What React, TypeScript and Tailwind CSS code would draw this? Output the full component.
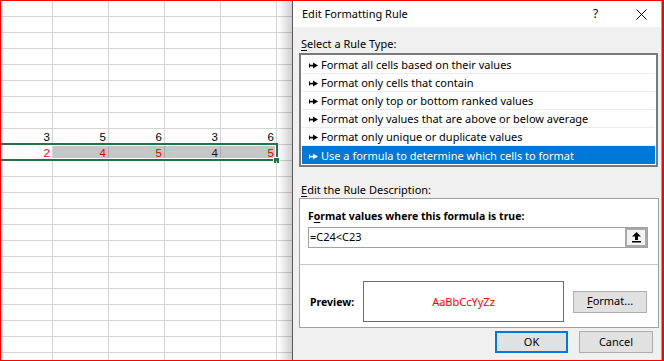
const font = { fontFamily: '"Noto Sans", "Open Sans", sans-serif' };

const COLS = [52, 56, 56, 56, 56, 40];
const ROWS = 23;

const rowValues: Record<number, { v: string; c: string }[]> = {
  8: [
    { v: "3", c: "text-black" },
    { v: "5", c: "text-black" },
    { v: "6", c: "text-black" },
    { v: "3", c: "text-black" },
    { v: "6", c: "text-black" },
  ],
  9: [
    { v: "2", c: "text-[#ff0000]" },
    { v: "4", c: "text-[#e00000]" },
    { v: "5", c: "text-[#e00000]" },
    { v: "4", c: "text-[#1a1a1a]" },
    { v: "5", c: "text-[#e00000]" },
  ],
};

function Sheet() {
  return (
    <div className="w-[291px] h-full shrink-0 flex flex-col bg-white" style={{ fontFamily: '"Liberation Sans", Arial, sans-serif' }}>
      {Array.from({ length: ROWS }).map((_, r) => (
        <div key={r} className="relative flex h-[16px] shrink-0">
          {COLS.map((w, c) => {
            const cell = rowValues[r]?.[c];
            const selected = r === 9 && c > 0 && c < 5;
            return (
              <div
                key={c}
                style={{ width: w }}
                className={`shrink-0 h-full border-r border-b border-[#d4d4d4] flex items-end justify-end pr-[2px] text-[11.5px] leading-[13px] ${
                  selected ? "bg-[#c6c6c6] border-r-[#ababab]" : ""
                } ${cell ? cell.c : ""}`}
              >
                {cell?.v}
              </div>
            );
          })}
          {r === 9 && (
            <>
              <div className="absolute left-[-4px] top-[-2px] w-[281px] h-[18px] border-2 border-[#217346] shadow-[inset_0_0_0_1px_#ffffff]" />
              <div className="absolute left-[272px] top-[12px] w-[7px] h-[7px] bg-[#217346] border border-white" />
            </>
          )}
        </div>
      ))}
    </div>
  );
}

function RuleArrow({ white }: { white?: boolean }) {
  const col = white ? "#ffffff" : "#000000";
  return (
    <svg width="9" height="7" viewBox="0 0 9 7" className="shrink-0">
      <rect x="0" y="1.5" width="1" height="4" fill={col} />
      <rect x="0" y="2.8" width="5" height="1.6" fill={col} />
      <path d="M4 0.5 L9 3.5 L4 6.5 Z" fill={col} />
    </svg>
  );
}

const rules = [
  "Format all cells based on their values",
  "Format only cells that contain",
  "Format only top or bottom ranked values",
  "Format only values that are above or below average",
  "Format only unique or duplicate values",
  "Use a formula to determine which cells to format",
];

function Button({ children, primary, w }: { children: React.ReactNode; primary?: boolean; w: string }) {
  return (
    <div
      className={`${w} h-[22px] flex items-center justify-center bg-[#e1e1e1] text-[11px] text-black ${
        primary ? "border-2 border-[#0078d7]" : "border border-[#adadad]"
      }`}
    >
      {children}
    </div>
  );
}

function Dialog() {
  return (
    <div className="relative flex-1 h-full border-l border-r border-l-[#6f6f6f] border-r-[#a0a0a0] bg-[#f0f0f0] flex flex-col text-black" style={font}>
      <div className="absolute right-full top-0 bottom-0 w-[15px] bg-gradient-to-r from-transparent to-black/20" />

      <div className="h-[26px] shrink-0 bg-white flex items-center pl-[9px] text-[11px]">
        <span className="flex-1">Edit Formatting Rule</span>
        <span className="w-[8px] mr-[35px] text-[12px] leading-none">?</span>
        <svg width="11" height="11" viewBox="0 0 11 11" className="mr-[14px]">
          <path d="M0.5 0.5 L10.5 10.5 M10.5 0.5 L0.5 10.5" stroke="#000" strokeWidth="1" />
        </svg>
      </div>

      <div className="pt-[9px] flex flex-col">
        <div className="h-[17px] leading-[16px] pl-[8px] text-[11px]">
          <span className="underline underline-offset-2">S</span>elect a Rule Type:
        </div>
        <div className="ml-[6px] w-[359px] h-[114px] border-2 border-[#7a7a7a] bg-white p-px flex flex-col">
          {rules.map((r, i) => {
            const sel = i === rules.length - 1;
            return (
              <div
                key={r}
                className={`h-[18px] shrink-0 flex items-center gap-[3px] pl-[7px] pt-[2px] text-[11px] ${
                  sel ? "bg-[#0078d7] text-white" : "border-b border-[#ececec]"
                }`}
              >
                <RuleArrow white={sel} />
                <span>{r}</span>
              </div>
            );
          })}
        </div>

        <div className="mt-[14px] h-[17px] leading-[16px] pl-[8px] pt-px text-[11px]">
          <span className="underline underline-offset-2">E</span>dit the Rule Description:
        </div>
        <div className="ml-[6px] w-[360px] h-[130px] border border-[#a0a0a0] bg-white flex flex-col">
          <div className="pt-[9px] pl-[8px] h-[25px] leading-[16px] text-[10.5px] font-bold">
            F<span className="underline underline-offset-2">o</span>rmat values where this formula is true:
          </div>
          <div className="ml-[8px] mt-[3px] w-[340px] h-[21px] border border-[#a0a0a0] flex items-center">
            <span className="flex-1 pl-[1px] text-[11px]">=C24&lt;C23</span>
            <div className="w-[22px] h-[19px] border-2 border-[#a8a8a8] bg-[#f4f4f4] flex items-center justify-center">
              <svg width="9" height="11" viewBox="0 0 9 11">
                <path d="M4.5 0 L9 4.5 L6 4.5 L6 8 L3 8 L3 4.5 L0 4.5 Z" fill="#000" />
                <rect x="0" y="9" width="9" height="1.5" fill="#000" />
              </svg>
            </div>
          </div>
          <div className="mt-[16px] h-px bg-[#c8c8c8]" />
          <div className="mt-[16px] flex items-center pl-[10px]">
            <span className="w-[53px] pt-[2px] text-[10.5px] font-bold">Preview:</span>
            <div className="w-[201px] h-[41px] pt-[2px] border border-[#6d6d6d] flex items-center justify-center text-[11px] text-[#ff0000]">
              AaBbCcYyZz
            </div>
            <div className="ml-[9px]">
              <Button w="w-[74px]">
                <span>
                  <span className="underline underline-offset-2">F</span>ormat...
                </span>
              </Button>
            </div>
          </div>
        </div>

        <div className="mt-[3px] flex justify-end gap-[11px] pr-[8px]">
          <Button w="w-[73px]" primary>
            OK
          </Button>
          <Button w="w-[74px]">Cancel</Button>
        </div>
      </div>
    </div>
  );
}

export default function App() {
  return (
    <div className="w-[664px] h-[361px] border border-r-2 border-[#ff0000] overflow-hidden flex bg-white">
      <Sheet />
      <Dialog />
    </div>
  );
}
